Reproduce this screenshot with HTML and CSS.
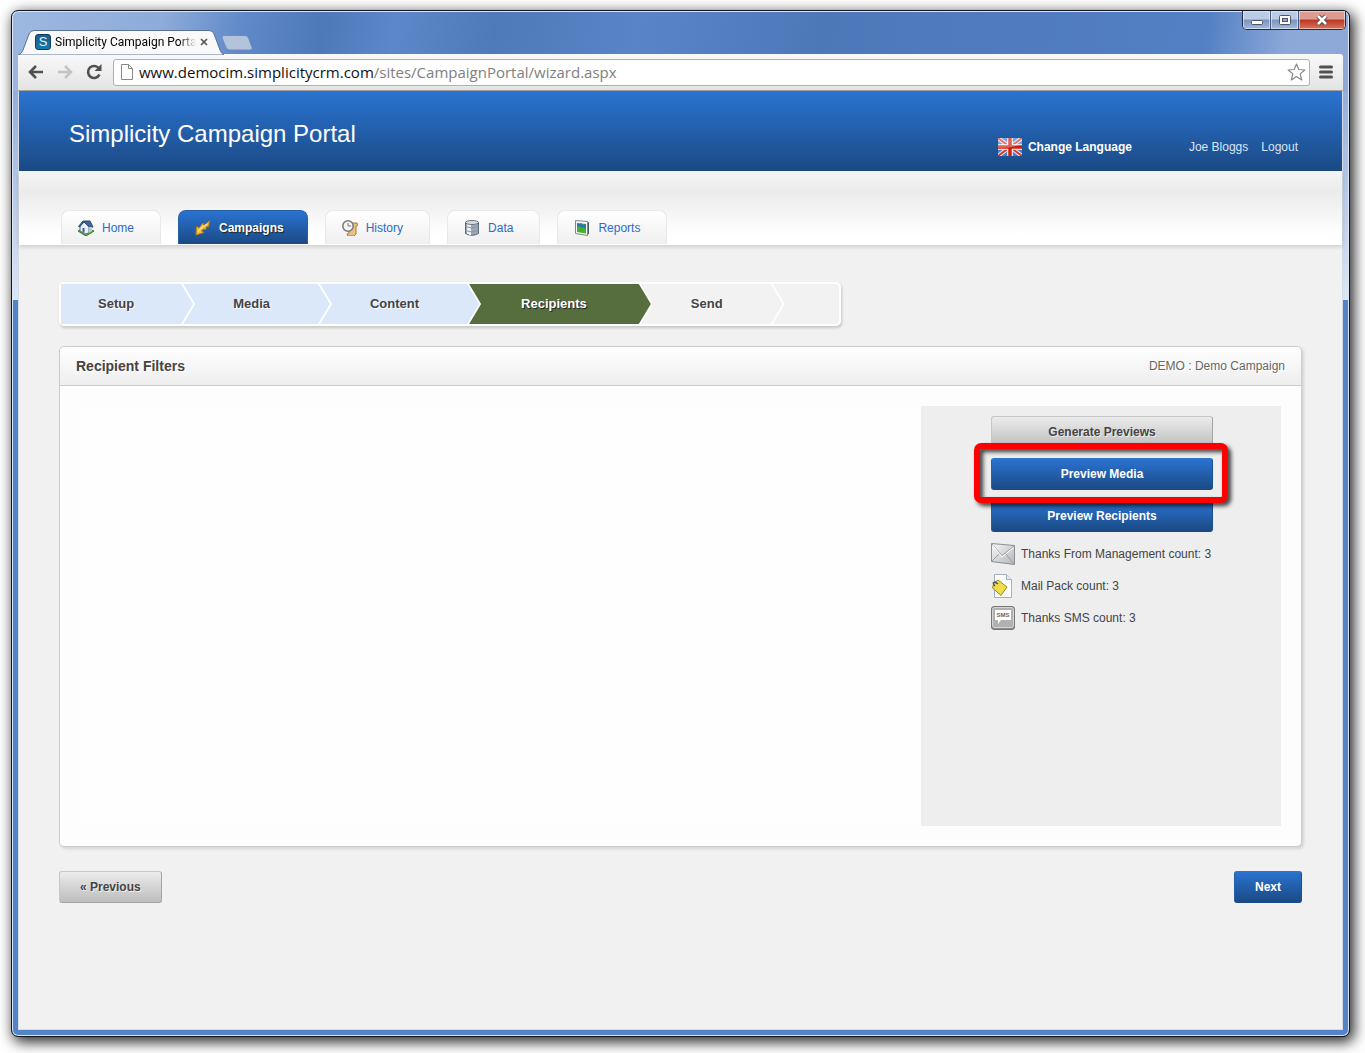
FILE: index.html
```html
<!DOCTYPE html>
<html lang="en">
<head>
    <meta charset="UTF-8">
    <meta name="viewport" content="width=device-width, initial-scale=1.0">
    <title>Simplicity Campaign Portal</title>
    <link rel="stylesheet" href="styles.css">
</head>
<body>
    <div class="window">
        <div class="titlebar">
            <div class="tab">
                <svg class="tab-shape" width="206" height="25" viewBox="0 0 206 25">
                    <path d="M0 25C3 24 4 22 5 20L11 4Q12.500 .5 16 .5H191Q195 .5 196 4L202 20Q203.500 24 206 25Z" fill="#f9f9f9" stroke="#5b7298" stroke-width="1"/>
                </svg>
                <span class="favicon">S</span>
                <span class="tab-title">Simplicity Campaign Porta</span>
                <button class="tab-close" aria-label="Close tab">
                    <svg width="8" height="8" viewBox="0 0 8 8"><path d="M1 1l6 6M7 1l-6 6" stroke="#555" stroke-width="1.700"/></svg>
                </button>
            </div>
            <button class="new-tab" aria-label="New tab">
                <svg width="32" height="16" viewBox="0 0 32 16"><path d="M3 .5H24Q26.500 .5 27.500 3L31 12.500Q32 15 29 15H9Q6 15 5 12.500L1 3Q.5 .5 3 .5Z" fill="#b3c3dc" stroke="#6d8cc0"/></svg>
            </button>
            <div class="window-controls">
                <button class="control" aria-label="Minimize">
                    <svg width="14" height="12" viewBox="0 0 14 12"><rect x="1.500" y="6.500" width="11" height="4" rx="1" fill="#fff" stroke="#4c5568"/></svg>
                </button>
                <button class="control" aria-label="Maximize">
                    <svg width="14" height="12" viewBox="0 0 14 12"><rect x="1.500" y="1.500" width="11" height="9" rx="1" fill="#fff" stroke="#4c5568"/><rect x="4.500" y="4.500" width="5" height="3" fill="#93a9cf" stroke="#4c5568"/></svg>
                </button>
                <button class="control close" aria-label="Close">
                    <svg width="14" height="12" viewBox="0 0 14 12"><path d="M3 2l8 8M11 2l-8 8" stroke="#4c4050" stroke-width="4.500"/><path d="M3 2l8 8M11 2l-8 8" stroke="#fff" stroke-width="2.600"/></svg>
                </button>
            </div>
        </div>

        <div class="toolbar">
            <button class="tool" aria-label="Back">
                <svg width="16" height="14" viewBox="0 0 16 14"><path d="M8 1L2 7l6 6M2 7h13" fill="none" stroke="#505050" stroke-width="2.600"/></svg>
            </button>
            <button class="tool" aria-label="Forward">
                <svg width="16" height="14" viewBox="0 0 16 14"><path d="M8 1l6 6-6 6M14 7H1" fill="none" stroke="#c4c4c4" stroke-width="2.600"/></svg>
            </button>
            <button class="tool" aria-label="Reload">
                <svg width="16" height="16" viewBox="0 0 16 16"><path d="M13 4.500A6 6 0 1 0 13.500 10.500" fill="none" stroke="#505050" stroke-width="2.600"/><path d="M15.500 0v7H8.500Z" fill="#505050"/></svg>
            </button>
            <div class="address">
                <svg width="12" height="16" viewBox="0 0 12 16"><path d="M.5 .5H7.500L11.500 4.500V15.500H.5ZM7.500 .5V4.500H11.500" fill="#fff" stroke="#888"/></svg>
                <span class="url">www.democim.simplicitycrm.com<span class="path">/sites/CampaignPortal/wizard.aspx</span></span>
                <button class="tool" aria-label="Bookmark">
                    <svg width="19" height="18" viewBox="0 0 19 18"><path d="M9.500 1l2.300 5.500 6 .5-4.600 3.900 1.500 6-5.200-3.300-5.200 3.300 1.500-6L1.200 7l6-.5Z" fill="#fff" stroke="#888" stroke-width="1.200" stroke-linejoin="round"/></svg>
                </button>
            </div>
            <button class="tool menu" aria-label="Menu">
                <svg width="14" height="14" viewBox="0 0 14 14"><path d="M1.500 2h11M1.500 7h11M1.500 12h11" stroke="#505050" stroke-width="3" stroke-linecap="round"/></svg>
            </button>
        </div>

        <div class="page">
            <header class="header">
                <h1>Simplicity Campaign Portal</h1>
                <div class="user-nav">
                    <a class="language" href="#">
                        <svg width="24" height="18" viewBox="0 0 24 18">
                            <rect width="24" height="18" fill="#3f82cf"/>
                            <path d="M0 0l24 18M24 0L0 18" stroke="#f1e9ea" stroke-width="4"/>
                            <path d="M0 0l24 18M24 0L0 18" stroke="#d8382e" stroke-width="2"/>
                            <path d="M12 0v18M0 9h24" stroke="#fff" stroke-width="5.500"/>
                            <path d="M12 0v18M0 9h24" stroke="#cf1c0c" stroke-width="3.500"/>
                            <path d="M0 0H24V6Q14 10 0 10Z" fill="#fff" opacity=".3"/>
                        </svg>
                        Change Language
                    </a>
                    <a href="#">Joe Bloggs</a>
                    <a href="#">Logout</a>
                </div>
            </header>

            <nav class="main-nav">
                <a href="#">
                    <svg width="16" height="16" viewBox="0 0 16 16">
                        <path d="M0 11l7-2 9 2-8 5Z" fill="#5fae3c" stroke="#2f7d20"/>
                        <path d="M2 6l4-4 5 5v6l-4 1-5-3Z" fill="#e9f0f7" stroke="#54718f"/>
                        <path d="M5 1h7l3 6-3 .5L6 2 1.500 7 .5 6.500Z" fill="#40668e" stroke="#2c4a69"/>
                        <path d="M12 7h2v4l-3 2V7Z" fill="#b9cadb"/>
                        <path d="M4.500 8v4l2 1V8Z" fill="#48617e"/>
                    </svg>
                    Home
                </a>
                <a class="active" href="#">
                    <svg width="16" height="16" viewBox="0 0 16 16">
                        <path d="M1 15L1.500 6.500 4 8 8 3l1 2.500L14.500 .5 13.500 7 11.500 6.500 10.500 9.500 8.500 9 6.500 11l2.500 1.500Z" fill="#f6bf3a" stroke="#b87a12" stroke-linejoin="round"/>
                        <path d="M3 12l3-4 6-4" fill="none" stroke="#ffe9a0"/>
                    </svg>
                    Campaigns
                </a>
                <a href="#">
                    <svg width="16" height="16" viewBox="0 0 16 16">
                        <path d="M6 3h9l1 2-2 1v8l-2 2H6l-1-2 2-1V3Z" fill="#e9c181" stroke="#a97b3d"/>
                        <circle cx="6" cy="6" r="5.200" fill="#f3f3f3" stroke="#777" stroke-width="1.500"/>
                        <path d="M6 3v3h3" fill="none" stroke="#777"/>
                    </svg>
                    History
                </a>
                <a href="#">
                    <svg width="16" height="16" viewBox="0 0 16 16">
                        <path d="M1.500 2.500v11q6.500 3.500 13 0v-11Z" fill="#9aa9b8" stroke="#566473"/>
                        <path d="M4 4v10M6 4v11" stroke="#edf2f6" stroke-width="2"/>
                        <ellipse cx="8" cy="2.500" rx="6.500" ry="2" fill="#d5dde4" stroke="#66737f"/>
                        <path d="M1.500 6.500q6.500 3 13 0M1.500 10.500q6.500 3 13 0" fill="none" stroke="#8794a0"/>
                    </svg>
                    Data
                </a>
                <a href="#">
                    <svg width="16" height="16" viewBox="0 0 16 16">
                        <path d="M13 1.500l2 1v11l-2 2Z" fill="#4b5963"/>
                        <path d="M1.500 .5L13.500 1.500V15.500L1.500 13.500Z" fill="#f4f6f7" stroke="#7c8890"/>
                        <path d="M3 3l9 1v9.500l-9-1.500Z" fill="#45b02c"/>
                        <path d="M3 3l2 1 2-1 2 2 3-1v5l-3-2-2 1-2-2-2 1Z" fill="#2b74b8"/>
                    </svg>
                    Reports
                </a>
            </nav>

            <main class="content">
                <ol class="wizard">
                    <li class="done"><a href="#">Setup</a></li>
                    <li class="done"><a href="#">Media</a></li>
                    <li class="done"><a href="#">Content</a></li>
                    <li class="current"><a href="#">Recipients</a></li>
                    <li><a href="#">Send</a></li>
                </ol>

                <section class="panel">
                    <div class="panel-head">
                        <h2>Recipient Filters</h2>
                        <span>DEMO : Demo Campaign</span>
                    </div>
                    <div class="panel-body">
                        <div class="filters"></div>
                        <aside class="previews">
                            <button class="btn grey">Generate Previews</button>
                            <div class="highlight">
                                <button class="btn blue">Preview Media</button>
                            </div>
                            <button class="btn blue">Preview Recipients</button>
                            <ul class="counts">
                                <li>
                                    <svg width="24" height="24" viewBox="0 0 24 24">
                                        <defs><linearGradient id="env" x1="0" y1="0" x2="1" y2="1"><stop offset="0" stop-color="#f8f8f8"/><stop offset="1" stop-color="#b2b6bb"/></linearGradient></defs>
                                        <path d="M.5 1.500L23.500 3.500V22.500L.5 19.500Z" fill="url(#env)" stroke="#8b8e92"/>
                                        <path d="M1 2l10 11.500L23 4M1 19l8-8M23 22l-9-11" fill="none" stroke="#9b9fa4"/>
                                        <path d="M1.500 3l9.500 12L22.500 5.500" fill="none" stroke="#fff"/>
                                    </svg>
                                    Thanks From Management count: 3
                                </li>
                                <li>
                                    <svg width="24" height="24" viewBox="0 0 24 24">
                                        <path d="M3.500 .5H15.500L20.500 5.500V23.500H3.500Z" fill="#fbfcfe" stroke="#a5afc0"/>
                                        <path d="M15.500 .5V5.500H20.500" fill="#e5eaf1" stroke="#a5afc0"/>
                                        <path d="M7 6l9 7-6 8.500L1.500 14 3 8.500Z" fill="#f1dc4b" stroke="#99851d" stroke-linejoin="round"/>
                                        <path d="M4 12c-4-4 0-5 3-2" fill="none" stroke="#555" stroke-width="1.500"/>
                                    </svg>
                                    Mail Pack count: 3
                                </li>
                                <li>
                                    <svg width="24" height="24" viewBox="0 0 24 24">
                                        <rect x=".5" y=".5" width="23" height="23" rx="2.500" fill="#8b8b8b" stroke="#777"/>
                                        <rect x="1.500" y="1.500" width="21" height="20" rx="2" fill="#b1b1b1" stroke="#d6d6d6"/>
                                        <path d="M4 4H20V14H10L7 18V14H4Z" fill="#fff"/>
                                        <text x="12" y="11" text-anchor="middle" font-family="Liberation Sans, sans-serif" font-size="6" font-weight="bold" fill="#666">SMS</text>
                                    </svg>
                                    Thanks SMS count: 3
                                </li>
                            </ul>
                        </aside>
                    </div>
                </section>

                <div class="actions">
                    <button class="btn grey">« Previous</button>
                    <button class="btn blue">Next</button>
                </div>
            </main>
        </div>
    </div>
</body>
</html>
```

FILE: styles.css
```css
* {
    margin: 0;
    padding: 0;
    box-sizing: border-box;
}
body {
    display: flex;
    min-height: 100vh;
    padding: 10px 15px 16px 11px;
    background: #fff;
    font-family: "Liberation Sans", Arial, sans-serif;
    font-size: 12px;
    color: #444;
}
a {
    color: inherit;
    text-decoration: none;
}
button {
    border: none;
    background: none;
    font-family: inherit;
    cursor: pointer;
}
svg {
    display: block;
    flex-shrink: 0;
}
ol, ul {
    list-style: none;
}

/* browser window */
.window {
    flex: 1;
    min-width: 0;
    display: flex;
    flex-direction: column;
    padding: 0 6px 6px;
    border: 1px solid #10141c;
    border-radius: 7px;
    background:
        linear-gradient(100deg, #9db8e0 0, #8eabd9 150px, #5f89c8 230px, #4e79b9 310px, #5c88c9 380px, #4e7ab9 480px, #5985c7 620px, #4d78b8 800px, #5380c4 1180px, #8ba8d8 1260px, #8ea9d6 100%) top / 100% 80px no-repeat,
        linear-gradient(#93aedb, #dce6f4) 0 80px / 100% 209px no-repeat,
        #5583c8;
    box-shadow: inset 0 0 0 1px #dce8f8, 3px 4px 14px 1px rgba(0, 0, 0, 0.85);
}
.titlebar {
    display: flex;
    align-items: flex-end;
    height: 43px;
}
.tab {
    position: relative;
    display: flex;
    align-items: center;
    width: 203px;
    height: 24px;
    padding: 0 13px 0 17px;
}
.tab-shape {
    position: absolute;
    left: 0;
    top: 0;
}
.favicon {
    position: relative;
    flex-shrink: 0;
    width: 16px;
    height: 16px;
    border: 1px solid #123c5c;
    border-radius: 3px;
    background: linear-gradient(#1b5c8c, #1679ae);
    color: #e4f3fb;
    font-size: 13px;
    line-height: 14px;
    text-align: center;
}
.tab-title {
    position: relative;
    flex: 1;
    margin-left: 4px;
    white-space: nowrap;
    font-family: Roboto, sans-serif;
    color: #000;
    -webkit-mask-image: linear-gradient(90deg, #000 88%, transparent);
    mask-image: linear-gradient(90deg, #000 88%, transparent);
}
.tab-close {
    position: relative;
    margin-left: 4px;
}
.new-tab {
    margin-bottom: 3px;
}
.window-controls {
    display: flex;
    align-self: flex-start;
    margin-left: auto;
    margin-right: -3px;
    border: 1px solid #1f2c45;
    border-top: none;
    border-radius: 0 0 5px 5px;
    overflow: hidden;
}
.control {
    display: flex;
    align-items: center;
    justify-content: center;
    width: 28px;
    height: 18px;
    border-right: 1px solid #44567a;
    background: linear-gradient(#bccbe5 45%, #7b93bd 50%, #a4b9dc);
    box-shadow: inset 0 0 0 1px rgba(255, 255, 255, 0.5);
}
.control.close {
    width: 46px;
    border-right: none;
    background: linear-gradient(#dc9c91 45%, #b93624 50%, #d8765a);
}
.toolbar {
    display: flex;
    align-items: center;
    gap: 13px;
    height: 37px;
    padding: 0 10px;
    border-bottom: 1px solid #a0a0a0;
    border-radius: 0 3px 0 0;
    background: linear-gradient(#f9f9f9, #e4e4e4);
}
.address {
    flex: 1;
    display: flex;
    align-items: center;
    gap: 6px;
    height: 27px;
    margin-left: -2px;
    padding: 0 3px 0 7px;
    border: 1px solid #b0b0b0;
    border-radius: 3px;
    background: #fff;
}
.url {
    flex: 1;
    font-family: "Open Sans", sans-serif;
    font-size: 15px;
    line-height: 24px;
    color: #111;
}
.url .path {
    color: #808080;
}
.toolbar .menu {
    margin-left: -4px;
}

/* portal */
.page {
    flex: 1;
    border: solid #d4dbe6;
    border-width: 0 1px 1px;
    background: #f1f1f1;
}
.header {
    display: flex;
    justify-content: space-between;
    align-items: center;
    height: 80px;
    padding: 0 44px 0 50px;
    background: linear-gradient(#2a73d1, #1b4a84);
    color: #fff;
}
.header h1 {
    padding-top: 6px;
    font-size: 24px;
    font-weight: normal;
}
.user-nav {
    display: flex;
    align-items: center;
    gap: 13px;
    padding-top: 32px;
    color: #d9e6f7;
}
.language {
    display: flex;
    align-items: center;
    gap: 6px;
    margin-right: 44px;
    color: #fff;
    font-weight: bold;
}
.main-nav {
    display: flex;
    align-items: flex-end;
    gap: 17px;
    height: 74px;
    padding: 0 42px;
    border-bottom: 1px solid #fff;
    background: linear-gradient(#f5f5f5, #ebebeb 20px, #fff 64px);
    box-shadow: 0 2px 4px rgba(0, 0, 0, 0.15);
}
.main-nav a {
    display: flex;
    align-items: center;
    gap: 8px;
    height: 34px;
    padding: 0 26px 0 16px;
    border: 1px solid #e9e9e9;
    border-bottom: none;
    border-radius: 8px 8px 0 0;
    background: linear-gradient(#fff, #efefef);
    color: #2f6bc6;
}
.main-nav .active {
    padding-right: 23px;
    border-color: #2460ac;
    background: linear-gradient(#2a73d1, #1b4a84);
    color: #fff;
    font-weight: bold;
    text-shadow: 1px 1px 1px #222;
}
.content {
    padding: 37px 40px;
}
.wizard {
    display: flex;
    max-width: 782px;
    border: 2px solid #fff;
    border-radius: 5px;
    background: #f2f2f2;
    box-shadow: 1px 2px 3px rgba(0, 0, 0, 0.18);
}
.wizard li {
    position: relative;
    margin-left: -12px;
    background: #fff;
}
.wizard li, .wizard a {
    clip-path: polygon(0 0, calc(100% - 12px) 0, 100% 50%, calc(100% - 12px) 100%, 0 100%);
}
.wizard a {
    display: block;
    margin-right: 2px;
    padding: 0 60px 0 50px;
    background: #f2f2f2;
    color: #444;
    font-size: 13px;
    font-weight: bold;
    line-height: 40px;
    text-shadow: 1px 1px 0 #fff;
}
.wizard li:nth-child(1) {
    z-index: 5;
    margin-left: 0;
}
.wizard li:nth-child(1) a {
    padding: 0 59px 0 37px;
}
.wizard li:nth-child(2) {
    z-index: 4;
}
.wizard li:nth-child(3) {
    z-index: 3;
}
.wizard li:nth-child(4) {
    z-index: 2;
}
.wizard .done a {
    background: #dbe8f9;
}
.wizard .current a {
    padding: 0 64px 0 52px;
    background: #566d3d;
    color: #fff;
    text-shadow: 1px 1px 1px #222;
}
.panel {
    margin-top: 20px;
    border: 1px solid #ccc;
    border-radius: 5px;
    background: #fdfdfd;
    box-shadow: 2px 2px 3px rgba(0, 0, 0, 0.12);
}
.panel-head {
    display: flex;
    justify-content: space-between;
    align-items: center;
    height: 39px;
    padding: 0 16px;
    border-bottom: 1px solid #ccc;
    border-radius: 5px 5px 0 0;
    background: linear-gradient(#fff, #eee);
    color: #666;
    text-shadow: 1px 1px 0 #fff;
}
.panel-head h2 {
    color: #444;
    font-size: 14px;
}
.panel-body {
    display: flex;
    min-height: 460px;
    padding: 20px;
}
.filters {
    flex: 1;
    background: #fefefe;
}
.previews {
    display: flex;
    flex-direction: column;
    gap: 10px;
    width: 360px;
    padding: 10px 68px 0 70px;
    background: #eee;
}
.btn {
    height: 32px;
    padding: 0 20px;
    border: 1px solid;
    border-radius: 3px;
    font-size: 12px;
    font-weight: bold;
}
.previews .btn {
    width: 100%;
}
.btn.grey {
    border-color: #c6c6c6 #a5a5a5 #a5a5a5 #c6c6c6;
    background: linear-gradient(#ececec, #bdbdbd);
    color: #444;
    text-shadow: 1px 1px 0 #eee;
}
.btn.blue {
    border-color: #2f74cb #1c4f90 #1b4a84 #2460ac;
    background: linear-gradient(#2a73d1, #1b4a84);
    color: #fff;
}
.highlight {
    position: relative;
}
/* red marker round the button */
.highlight::after {
    content: "";
    position: absolute;
    inset: -15px -15px -13px -17px;
    border: 6px solid #f00;
    border-radius: 7px;
    filter: drop-shadow(3px 3px 2px rgba(0, 0, 0, 0.75));
    pointer-events: none;
    z-index: 1;
}
.counts li {
    display: flex;
    align-items: center;
    gap: 6px;
    height: 24px;
    margin-bottom: 8px;
    white-space: nowrap;
}
.actions {
    display: flex;
    justify-content: space-between;
    margin-top: 24px;
}
```
